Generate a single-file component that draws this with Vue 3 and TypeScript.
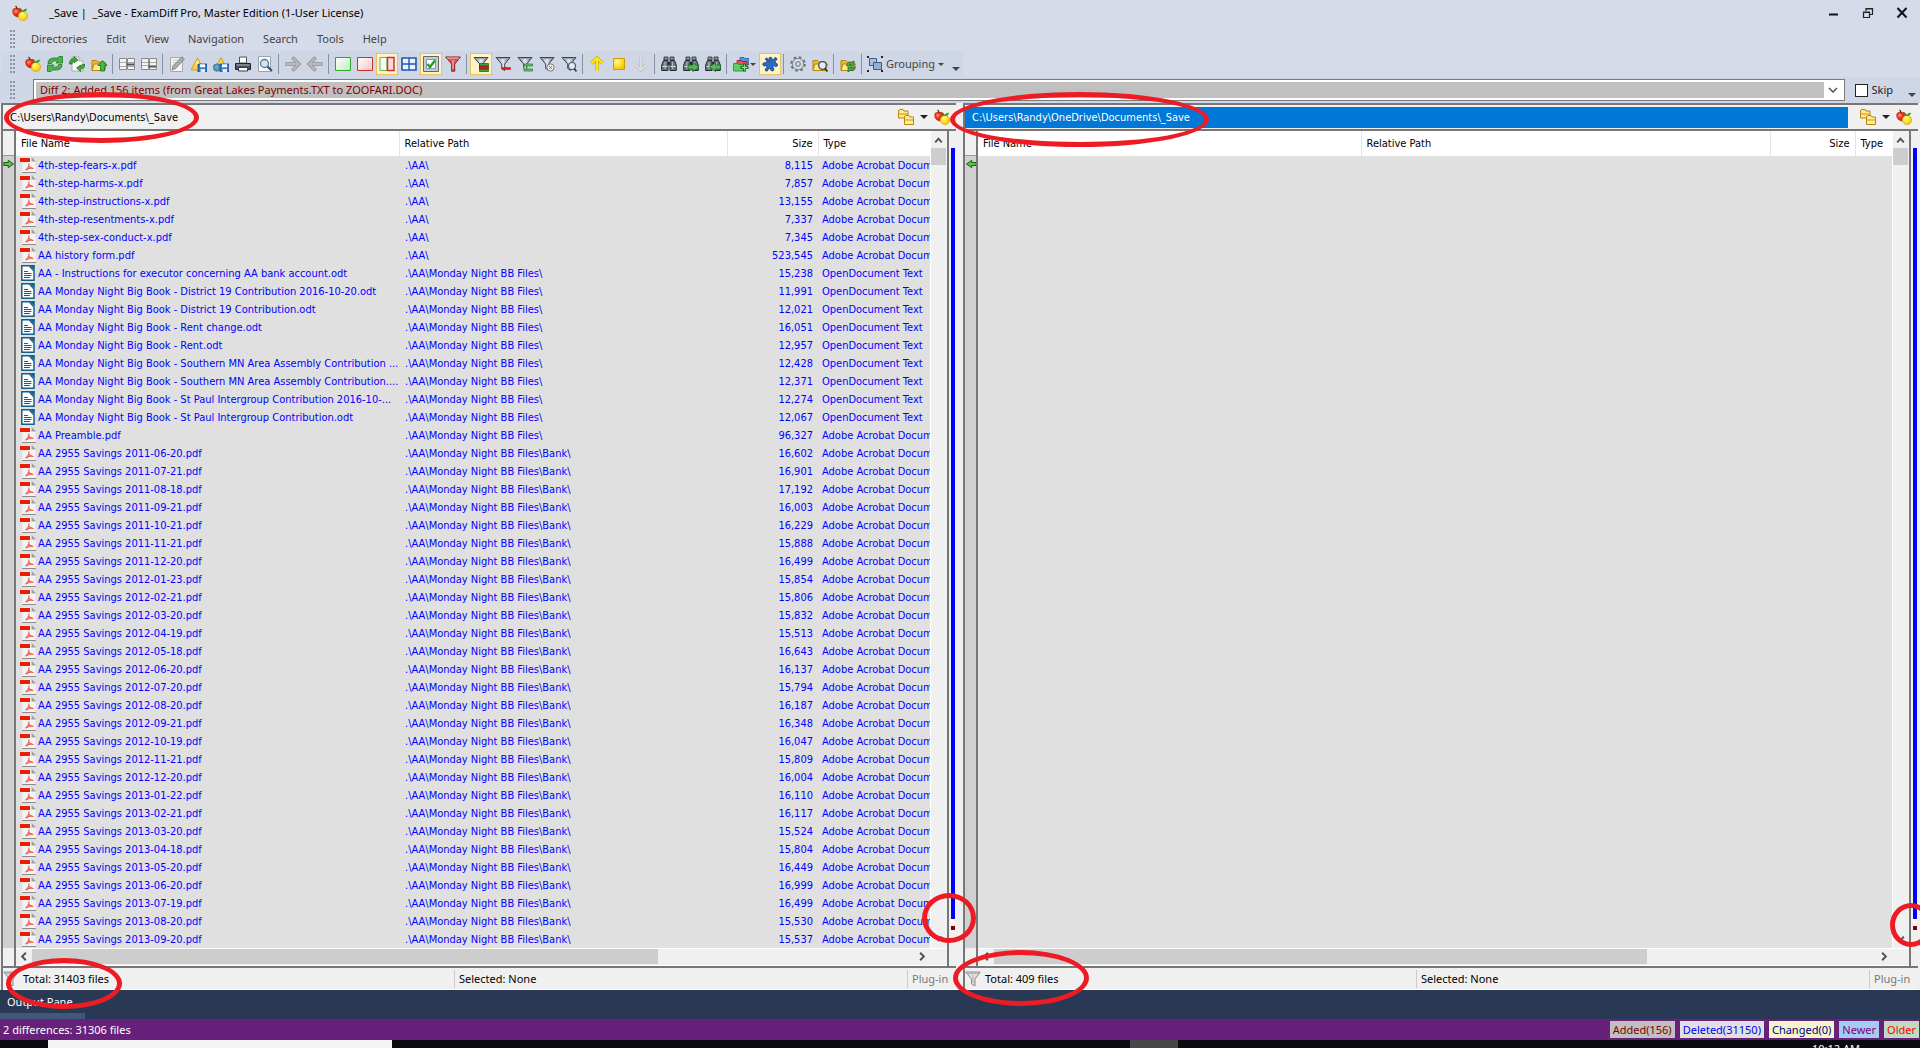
<script setup lang="ts">
import { ref } from 'vue'

interface FileRow { name: string; path: string; size: string; kind: 'pdf' | 'odt' }
interface Tool { icon: string; label: string; on?: boolean; drop?: boolean }

const menus = ['Directories', 'Edit', 'View', 'Navigation', 'Search', 'Tools', 'Help']

const fruit = '<path d="M5 3.500Q.6 2.500.6 6.500 1 11 5.500 12 10.500 11 10 6 9.500 2.500 5 3.500z" fill="url(#gRed)" stroke="#b51a08" stroke-width=".5"/><path d="M5 4Q5 2 3.500 1" stroke="#5a2408" fill="none" stroke-width="1.300"/><circle cx="11" cy="11" r="4.600" fill="url(#gYel)" stroke="#d99a00" stroke-width=".6"/><path d="M10.500 7Q7.500 6.500 8.500 4 11 4.500 10.800 6.500 11.500 3.500 15 3.800 14.500 7 10.500 7z" fill="#2f9e1c"/>'
const folder = '<path d="M1 4.500h4.500l1.500 1.500h7v8H1z" fill="#e6ba35" stroke="#b8860b"/><path d="M3 8h12.500l-2 6.500H1z" fill="#ffe98a" stroke="#b8860b"/>'
const funnel = '<path d="M1 1.500h14L9.700 8v6.500l-3 -2V8z" fill="url(#gSteel)" stroke="#3d4650" stroke-width="1"/><path d="M2.500 2.500h11" stroke="#9aa4ae"/>'
const binoc = '<path d="M3 1h4v3H3zM9 1h4v3H9z" fill="#8b949e" stroke="#252c33" stroke-width=".8"/><path d="M2.500 4.500h4.500v10H.7V9zM9 4.500h4.500L15.300 9v5.500H9z" fill="#6c757e" stroke="#252c33"/><path d="M7 6h2v3H7z" fill="#252c33"/><path d="M1.500 10.500h5M9.500 10.500h5" stroke="#dfe4e8"/><path d="M4 6v7M11.500 6v7" stroke="#b7c0c8"/>'
const disk = '<path d="M7 8h9v8H7z" fill="#3a78cc" stroke="#174a91" stroke-width=".8"/><path d="M9 8.300h5v3H9z" fill="#fff"/><path d="M9.500 13h4.500v3H9.500z" fill="#dbe9fa"/>'
const warn = '<path d="M6.500 2L13 14H0z" fill="#ffd43a" stroke="#c99100" stroke-width=".8"/><path d="M6.500 4L9 8.500H4z" fill="#fff0a0"/>'

const icons: Record<string, string> = {
  fruit,
  refresh: '<path d="M1 7.500Q1 2 7 2h3.500L12 .5h3.500V7H9l1.800-2Q5 4 4.500 7.500z" fill="#4bb34b" stroke="#1d7a26" stroke-width=".8"/><path d="M15 8.500Q15 14 9 14H5.500L4 15.500H.5V9H7l-1.800 2Q11 12 11.500 8.500z" fill="#4bb34b" stroke="#1d7a26" stroke-width=".8"/>',
  pageRefresh: '<path d="M3 1h7l4 4v10H3z" fill="#fdfdfd" stroke="#a5abb5"/><path d="M10 1v4h4" fill="#dde" stroke="#a5abb5"/><path d="M.5 8Q.5 2.500 5 2.500V.5L9 4 5 7V5Q3 5 3 8z" fill="#3fa93f" stroke="#176b20" stroke-width=".7"/><path d="M15.800 8.500Q15.800 13 11.500 13v2.500L7.500 12l4-3v1.800Q13 10.500 13 8.500z" fill="#3fa93f" stroke="#176b20" stroke-width=".7"/>',
  folderUp: folder + '<path d="M11.500 4.500L16 9.500h-2.500V15h-4V9.500H7z" fill="#44b944" stroke="#16701f" stroke-width=".8"/>',
  mergeA: '<path d="M.5 2.500h7v11h-7zM8.500 2.500h7v11h-7z" fill="#f4f4f4" stroke="#8a8a8a"/><path d="M1 6.500h6M9 6.500h6M1 10.500h6M9 10.500h6" stroke="#aaa"/><path d="M8 8.500h7" stroke="#555" stroke-width="2"/>',
  mergeB: '<path d="M.5 2.500h7v11h-7zM8.500 2.500h7v11h-7z" fill="#f4f4f4" stroke="#8a8a8a"/><path d="M1 6.500h6M9 6.500h6M1 9.500h6" stroke="#aaa"/><path d="M8 10.500h7" stroke="#555" stroke-width="2"/>',
  edit: '<path d="M1.500 1.500h12v14h-12z" fill="#f3f3f3" stroke="#a8a8a8"/><path d="M4 4h7M3.500 6.500h5M3.500 9h3" stroke="#ccc"/><path d="M3 14l1-4L13 .8l2.500 2.400L6.500 12.500z" fill="#adadad" stroke="#777" stroke-width=".8"/>',
  saveWarn: warn + disk,
  saveGlobe: '<path d="M8 1.500L14 13H2z" fill="#ffd43a" stroke="#c99100" stroke-width=".8"/><circle cx="4" cy="11.500" r="3.700" fill="#4f93c9" stroke="#2c6698" stroke-width=".7"/><path d="M2 10q2-2 3 0t-1 3q-2 0-2-3z" fill="#74b856"/>' + disk,
  print: '<path d="M4.500 1h7v6h-7z" fill="#fff" stroke="#4c5661"/><path d="M.5 7.500h15v6H.5z" fill="#48525d" stroke="#20272e"/><path d="M1.500 9h13" stroke="#aeb6be"/><path d="M3.500 11.500h9v3.500h-9z" fill="#fff" stroke="#353d46"/>',
  preview: '<path d="M1.500 .5h12v15h-12z" fill="#fafafa" stroke="#9aa2ac"/><circle cx="7.500" cy="7.500" r="4" fill="#cfe5f6" stroke="#56779a" stroke-width="1.300"/><path d="M10.500 10.500L15 15" stroke="#34506d" stroke-width="2.200"/>',
  right: '<path d="M1 8h12M8.500 2.500L14 8l-5.500 5.500" fill="none" stroke="#8f8f8f" stroke-width="3.600" stroke-linecap="round"/><path d="M1 8h12M8.500 2.500L14 8l-5.500 5.500" fill="none" stroke="#b9b9b9" stroke-width="2" stroke-linecap="round"/>',
  left: '<path d="M15 8H3M7.500 2.500L2 8l5.500 5.500" fill="none" stroke="#8f8f8f" stroke-width="3.600" stroke-linecap="round"/><path d="M15 8H3M7.500 2.500L2 8l5.500 5.500" fill="none" stroke="#b9b9b9" stroke-width="2" stroke-linecap="round"/>',
  green: '<path d="M.5 1.500h15v13H.5z" fill="url(#gLg)" stroke="#2fa52f"/>',
  red: '<path d="M.5 1.500h15v13H.5z" fill="url(#gLr)" stroke="#c9302a"/>',
  split: '<path d="M1 1.500h7v13H1z" fill="#f4fff4" stroke="#6fae5c"/><path d="M8.500 1.500H15v13H8.500z" fill="#fbdcdc" stroke="#cf2b2b" stroke-width="1.400"/>',
  grid: '<path d="M1 2h14v12H1z" fill="#e8f3ff" stroke="#1f57b5" stroke-width="1.600"/><path d="M8 2v12M1 8h14" stroke="#1f57b5" stroke-width="1.400"/>',
  check: '<path d="M.5 .5h15v15H.5z" fill="#c5ccd6" stroke="#5d6978"/><path d="M3.500 3.500h9v9h-9z" fill="#fff" stroke="#8b95a2"/><path d="M4.500 8l2.500 3L12 4.500" fill="none" stroke="#23a023" stroke-width="2.400"/>',
  funnelRed: '<path d="M.7 1h14.600L9.700 8v7.200h-3V8z" fill="#d75a5a" stroke="#8e1717"/><path d="M2 2h12M8 4v9" stroke="#f6c4c4"/>',
  funnelAll: funnel + '<path d="M6.500 7.500h9v2.500h-9zM6.500 13h9v2.500h-9z" fill="#2ea63a" stroke="#115e1a" stroke-width=".7"/><path d="M6.500 10.200h9v2.500h-9z" fill="#d81e1e" stroke="#7d0a0a" stroke-width=".7"/>',
  funnelMinus: funnel + '<path d="M7 11.500h8.500v2H7z" fill="#ee1c1c" stroke="#b30808" stroke-width=".5"/>',
  funnelEq: funnel + '<path d="M7 8h8.500v2H7zM7 13h8.500v2H7z" fill="#6cc573" stroke="#1c7a27" stroke-width=".7"/>',
  funnelX: funnel + '<circle cx="11.500" cy="11.500" r="3.600" fill="#f2f2f2" stroke="#777"/><path d="M10 10l3 3M13 10l-3 3" stroke="#c85a5a"/>',
  funnelFind: funnel + '<circle cx="11" cy="10" r="3.500" fill="#e1ecf5" stroke="#46607a" stroke-width="1.200"/><path d="M13 12.500l2.500 3" stroke="#333" stroke-width="1.600"/>',
  up: '<path d="M8 15V3M2.500 7.500L8 2l5.500 5.500" fill="none" stroke="#cfae00" stroke-width="3.400"/><path d="M8 15V3M2.500 7.500L8 2l5.500 5.500" fill="none" stroke="#ffe81a" stroke-width="2"/>',
  stop: '<path d="M2.500 2.500h11v11h-11z" fill="url(#gYel)" stroke="#d79b00"/>',
  down: '<path d="M8 1v12M2.500 8.500L8 14l5.500-5.500" fill="none" stroke="#b9bcc2" stroke-width="3.200"/><path d="M8 1v12M2.500 8.500L8 14l5.500-5.500" fill="none" stroke="#dcdee2" stroke-width="1.800"/>',
  find: binoc,
  findNext: binoc + '<path d="M5 9h5V6.500l6 4.500-6 4.500V13H5z" fill="#57b757" stroke="#1a6a22" stroke-width=".8"/>',
  findPrev: binoc + '<path d="M15.500 9h-5V6.500L4.500 11l6 4.500V13h5z" fill="#57b757" stroke="#1a6a22" stroke-width=".8"/>',
  foldersAdd: '<path d="M7 1.500h4l1 1h4v6H7z" fill="#5b8fe0" stroke="#2255a8" stroke-width=".8"/><path d="M4 4.500h4l1 1h5v6H4z" fill="#ee5050" stroke="#a51616" stroke-width=".8"/><path d="M.5 7.500h4l1 1h5V15H.5z" fill="#5fce6a" stroke="#1d8a2b" stroke-width=".8"/><path d="M11.500 7.500v8M7.500 11.500h8" stroke="#0d5e17" stroke-width="3"/><path d="M11.500 8.500v6M8.500 11.500h6" stroke="#7eea86" stroke-width="1.300"/>',
  plugin: '<path d="M8 5.500Q5.500 3 7.500 1.500 10.500 .5 10 4l2-.7Q12.500 .5 14.500 2 16 4 13 5l.7 2Q16.300 7.500 15.300 10 13.500 11.500 12 9.500L10.800 11Q13 13.500 11 15 8 15.500 8.500 12l-2 .8Q6 16 3.500 14.800 2.500 12.500 5 11.500L4.200 9.500Q1 11 .7 8 1.500 5.500 4.500 7L5 5Q2.500 4 4 2 6 1.500 6 4.500z" fill="#2d6ac4" stroke="#173f86" stroke-width=".8"/>',
  gear: '<circle cx="8" cy="8" r="6.500" fill="none" stroke="#6c757f" stroke-width="2.600" stroke-dasharray="2.600 2.500"/><circle cx="8" cy="8" r="5.600" fill="#d9dee3" stroke="#7c858f"/><circle cx="8" cy="8" r="2.400" fill="#cfd6e5" stroke="#68717b"/>',
  folderFind: folder + '<circle cx="10.500" cy="9.500" r="3.800" fill="#e1eef8" stroke="#3e4b58" stroke-width="1.300"/><path d="M12.800 12.500L15.500 15.500" stroke="#333" stroke-width="1.800"/>',
  folderSync: folder + '<path d="M6.500 10Q7.500 5.500 12 6.500L14 5v5H9.500L11 8.500Q9 8 8.500 10z" fill="#49b04d" stroke="#14601c" stroke-width=".7"/><path d="M15.500 11Q14.500 15.500 10 14.500L8 16v-5h4.500L11 12.500q2 .5 2.500-1.500z" fill="#49b04d" stroke="#14601c" stroke-width=".7"/>',
  group: '<path d="M0 0h2v2H0zM14 0h2v2h-2zM0 14h2v2H0zM14 14h2v2h-2z" fill="#222"/><path d="M2.500 2.500h7v7h-7z" fill="#a9bfdb" stroke="#3e5c80"/><path d="M6.500 6.500h8v7h-8z" fill="#8fb0d6" stroke="#3e5c80"/>',
  folders: '<path d="M.5 1.500L2 .5h3l1 1.500h4v7H.5z" fill="#ffe98a" stroke="#b8860b"/><path d="M.5 5h9" stroke="#c9981c"/><path d="M6.500 7.500L8 6.500h3L12 8h3.500v7.500h-9z" fill="#ffec96" stroke="#b8860b"/><path d="M7 11h8" stroke="#c9981c"/>',
  pdf: '<path d="M2.500 .5h9l4 4v11h-13z" fill="#f4f4f4"/><path d="M2 15.500h14" stroke="#8c8c8c"/><path d="M11.500 0v4.500H16z" fill="#9c9c9c"/><path d="M0 1h10v4H0z" fill="#ec1c00"/><path d="M5.500 13Q9 11 9 6.500M8.500 8.500Q10 11.500 13.500 11.500M6 13Q9 10.500 12.500 11.500" fill="none" stroke="#ef5b50" stroke-width="1.100"/>',
  odt: '<path d="M1.800 .8h7.500L14 6v9.200H1.800z" fill="#fff" stroke="#10608f" stroke-width="1.500"/><path d="M9.500 0L14.800 5.500V0z" fill="#10608f"/><path d="M4 6.500h4M4 8.500h7.500M4 10.500h7.500M4 12.500h6" stroke="#10608f"/>',
  markRight: '<path d="M1 6h6V3l7 5-7 5v-3H1z" fill="#55c43e" stroke="#1d5f16" stroke-width="1.300"/>',
  markLeft: '<path d="M15 6H9V3L2 8l7 5v-3h6z" fill="#55c43e" stroke="#1d5f16" stroke-width="1.300"/>',
  funnelGray: '<path d="M.7 1h14.600L10 8v7l-3.500-2V8z" fill="#dedede" stroke="#8c8c8c"/><path d="M2 2.500h12M8 4v8" stroke="#b5b5b5"/>',
}

const toolGroups: Tool[][] = [
  [{ icon: 'fruit', label: 'Compare' }, { icon: 'refresh', label: 'Re-compare' }, { icon: 'pageRefresh', label: 'Refresh files' }, { icon: 'folderUp', label: 'Up one level' }],
  [{ icon: 'mergeA', label: 'Side by side' }, { icon: 'mergeB', label: 'Stacked' }],
  [{ icon: 'edit', label: 'Edit' }, { icon: 'saveWarn', label: 'Save' }, { icon: 'saveGlobe', label: 'Save HTML report' }, { icon: 'print', label: 'Print' }, { icon: 'preview', label: 'Print preview' }],
  [{ icon: 'right', label: 'Copy right' }, { icon: 'left', label: 'Copy left' }],
  [{ icon: 'green', label: 'First only' }, { icon: 'red', label: 'Second only' }, { icon: 'split', label: 'Both', on: true }, { icon: 'grid', label: 'Grid' }, { icon: 'check', label: 'Select', on: true }, { icon: 'funnelRed', label: 'Filters' }],
  [{ icon: 'funnelAll', label: 'Show all', on: true }, { icon: 'funnelMinus', label: 'Show differences' }, { icon: 'funnelEq', label: 'Show identical' }, { icon: 'funnelX', label: 'Hide excluded' }, { icon: 'funnelFind', label: 'Custom filter' }],
  [{ icon: 'up', label: 'Previous difference' }, { icon: 'stop', label: 'Current difference' }, { icon: 'down', label: 'Next difference' }],
  [{ icon: 'find', label: 'Find' }, { icon: 'findNext', label: 'Find next' }, { icon: 'findPrev', label: 'Find previous' }],
  [{ icon: 'foldersAdd', label: 'Snapshots', drop: true }, { icon: 'plugin', label: 'Plug-ins', on: true }],
  [{ icon: 'gear', label: 'Options' }, { icon: 'folderFind', label: 'Browse' }],
  [{ icon: 'folderSync', label: 'Synchronize' }],
]

const aa = '.\\AA\\'
const bb = aa + 'Monday Night BB Files\\'
const big = 'AA Monday Night Big Book - '
const pdf = (name: string, path: string, size: string): FileRow => ({ name, path, size, kind: 'pdf' })
const odt = (name: string, size: string): FileRow => ({ name, path: bb, size, kind: 'odt' })

const savings = `2011-06-20 16,602|2011-07-21 16,901|2011-08-18 17,192|2011-09-21 16,003|2011-10-21 16,229|2011-11-21 15,888|2011-12-20 16,499|2012-01-23 15,854|2012-02-21 15,806|2012-03-20 15,832|2012-04-19 15,513|2012-05-18 16,643|2012-06-20 16,137|2012-07-20 15,794|2012-08-20 16,187|2012-09-21 16,348|2012-10-19 16,047|2012-11-21 15,809|2012-12-20 16,004|2013-01-22 16,110|2013-02-21 16,117|2013-03-20 15,524|2013-04-18 15,804|2013-05-20 16,449|2013-06-20 16,999|2013-07-19 16,499|2013-08-20 15,530|2013-09-20 15,537`

const files: FileRow[] = [
  pdf('4th-step-fears-x.pdf', aa, '8,115'),
  pdf('4th-step-harms-x.pdf', aa, '7,857'),
  pdf('4th-step-instructions-x.pdf', aa, '13,155'),
  pdf('4th-step-resentments-x.pdf', aa, '7,337'),
  pdf('4th-step-sex-conduct-x.pdf', aa, '7,345'),
  pdf('AA history form.pdf', aa, '523,545'),
  odt('AA - Instructions for executor concerning AA bank account.odt', '15,238'),
  odt(big + 'District 19 Contribution 2016-10-20.odt', '11,991'),
  odt(big + 'District 19 Contribution.odt', '12,021'),
  odt(big + 'Rent change.odt', '16,051'),
  odt(big + 'Rent.odt', '12,957'),
  odt(big + 'Southern MN Area Assembly Contribution ...', '12,428'),
  odt(big + 'Southern MN Area Assembly Contribution....', '12,371'),
  odt(big + 'St Paul Intergroup Contribution 2016-10-...', '12,274'),
  odt(big + 'St Paul Intergroup Contribution.odt', '12,067'),
  pdf('AA Preamble.pdf', bb, '96,327'),
  ...savings.split('|').map((s) => {
    const [date, size] = s.split(' ')
    return pdf(`AA 2955 Savings ${date}.pdf`, bb + 'Bank\\', size)
  }),
]

const panes = ref([
  { id: 'first', dir: 'C:\\Users\\Randy\\Documents\\_Save', active: false, total: 'Total: 31403 files', mark: 'markRight', rows: files },
  { id: 'second', dir: 'C:\\Users\\Randy\\OneDrive\\Documents\\_Save', active: true, total: 'Total: 409 files', mark: 'markLeft', rows: [] as FileRow[] },
])

const legend = [
  { text: 'Added(156)', cls: 'added' },
  { text: 'Deleted(31150)', cls: 'deleted' },
  { text: 'Changed(0)', cls: 'changed' },
  { text: 'Newer', cls: 'newer' },
  { text: 'Older', cls: 'older' },
]
const typeName = { pdf: 'Adobe Acrobat Docum', odt: 'OpenDocument Text' }
const skip = ref(false)
</script>

<template>
  <div class="app">
    <svg class="defs" width="0" height="0" aria-hidden="true">
      <defs>
        <radialGradient id="gRed" cx=".35" cy=".35" r=".7"><stop offset="0" stop-color="#ff9a80" /><stop offset=".4" stop-color="#f0351c" /><stop offset="1" stop-color="#cc1a06" /></radialGradient>
        <radialGradient id="gYel" cx=".35" cy=".3" r=".9"><stop offset="0" stop-color="#fff9a0" /><stop offset=".5" stop-color="#ffdc1e" /><stop offset="1" stop-color="#f2b200" /></radialGradient>
        <linearGradient id="gSteel"><stop offset="0" stop-color="#6d7883" /><stop offset=".5" stop-color="#e6ebef" /><stop offset="1" stop-color="#56606a" /></linearGradient>
        <linearGradient id="gLg" x2="1" y2="1"><stop offset="0" stop-color="#fff" /><stop offset="1" stop-color="#bfeebf" /></linearGradient>
        <linearGradient id="gLr" x2="1" y2="1"><stop offset="0" stop-color="#fff" /><stop offset="1" stop-color="#f8c4c0" /></linearGradient>
      </defs>
    </svg>

    <header class="titlebar">
      <svg class="icon" viewBox="0 0 16 16" v-html="icons.fruit" />
      <h1>_Save |&nbsp; _Save - ExamDiff Pro, Master Edition (1-User License)</h1>
      <div class="win">
        <button type="button" aria-label="Minimize"><svg viewBox="0 0 12 12"><path d="M1 7.500h9" stroke="#111" stroke-width="2" /></svg></button>
        <button type="button" aria-label="Restore"><svg viewBox="0 0 12 12"><path d="M1.500 5.500h6v5h-6zM1 5h7M4 4V1.500h6.500v6H8M4 2h6.500" fill="none" stroke="#222" stroke-width="1.200" /></svg></button>
        <button type="button" aria-label="Close"><svg viewBox="0 0 12 12"><path d="M1.500 1l9 9.500M10.500 1l-9 9.500" stroke="#111" stroke-width="2" /></svg></button>
      </div>
    </header>

    <nav class="menubar">
      <i class="grip" />
      <button v-for="m in menus" :key="m" type="button">{{ m }}</button>
    </nav>

    <div class="toolbar" role="toolbar">
      <i class="grip" />
      <div v-for="(g, gi) in toolGroups" :key="gi" class="group">
        <button v-for="t in g" :key="t.icon" type="button" :aria-label="t.label" :class="{ on: t.on, drop: t.drop }">
          <svg class="icon" viewBox="0 0 16 16" v-html="icons[t.icon]" />
          <i v-if="t.drop" class="caret small" />
        </button>
      </div>
      <button type="button" class="grouping">
        <svg class="icon" viewBox="0 0 16 16" v-html="icons.group" />Grouping<i class="caret small" />
      </button>
      <i class="caret more" />
    </div>

    <div class="diffbar">
      <i class="grip" />
      <div class="combo">
        <select aria-label="Difference">
          <option>Diff 2: Added 156 items (from Great Lakes Payments.TXT to ZOOFARI.DOC)</option>
        </select>
        <svg viewBox="0 0 18 16"><path d="M5 6l4 4 4-4" fill="none" stroke="#444" stroke-width="1.300" /></svg>
      </div>
      <label><input v-model="skip" type="checkbox" />Skip</label>
      <i class="caret more" />
    </div>

    <main class="panes">
      <section v-for="p in panes" :key="p.id" class="pane" :class="p.id">
        <div class="pathrow">
          <input v-model="p.dir" :class="{ active: p.active }" aria-label="Directory" spellcheck="false" />
          <button type="button" aria-label="Browse folders"><svg class="icon" viewBox="0 0 16 16" v-html="icons.folders" /></button>
          <button type="button" aria-label="History"><i class="caret" /></button>
          <button type="button" aria-label="Compare"><svg class="icon" viewBox="0 0 16 16" v-html="icons.fruit" /></button>
          <span class="ring ring-path" />
        </div>

        <div class="body">
          <div class="gutter">
            <div class="gutter-head" />
            <div class="gutter-track"><svg viewBox="0 0 16 16" v-html="icons[p.mark]" /></div>
            <div class="gutter-foot" />
          </div>
          <div class="view">
            <div class="main">
              <div class="list">
                <table>
                  <colgroup><col class="c-name"><col class="c-path"><col class="c-size"><col></colgroup>
                  <thead>
                    <tr><th>File Name</th><th>Relative Path</th><th class="num">Size</th><th>Type</th></tr>
                  </thead>
                  <tbody>
                    <tr v-for="f in p.rows" :key="f.name">
                      <td><svg class="icon" viewBox="0 0 16 16" v-html="icons[f.kind]" />{{ f.name }}</td>
                      <td>{{ f.path }}</td>
                      <td class="num">{{ f.size }}</td>
                      <td class="type">{{ typeName[f.kind] }}</td>
                    </tr>
                  </tbody>
                </table>
              </div>
              <div class="vscroll">
                <svg viewBox="0 0 16 16"><path d="M4.500 11L8 7l3.500 4" fill="none" stroke="#505050" stroke-width="2" /></svg>
                <i class="thumb" />
                <svg class="end" viewBox="0 0 16 16"><path d="M4.500 5L8 9l3.500-4" fill="none" stroke="#505050" stroke-width="2" /></svg>
              </div>
            </div>
            <div class="hscroll">
              <svg viewBox="0 0 16 16"><path d="M10 4L6 8l4 4" fill="none" stroke="#505050" stroke-width="2" /></svg>
              <div class="track"><i class="thumb" /></div>
              <svg viewBox="0 0 16 16"><path d="M6 4l4 4-4 4" fill="none" stroke="#505050" stroke-width="2" /></svg>
            </div>
          </div>
          <div class="strip">
            <i class="blue" /><i class="red" />
            <span class="ring ring-strip" />
          </div>
        </div>

        <footer class="status">
          <svg class="icon" viewBox="0 0 16 16" v-html="icons.funnelGray" />
          <span class="total">{{ p.total }}</span>
          <span class="selected">Selected: None</span>
          <span class="plug">Plug-in</span>
          <span class="ring ring-total" />
        </footer>
      </section>
    </main>

    <div class="output"><button type="button">Output Pane</button></div>

    <footer class="appstatus">
      <span class="summary">2 differences: 31306 files</span>
      <span v-for="l in legend" :key="l.text" class="tag" :class="l.cls">{{ l.text }}</span>
    </footer>

    <div class="taskbar">
      <span class="search" /><span class="gap-a" /><span class="task" /><span class="gap-b" /><time>10:12 AM</time>
    </div>
  </div>
</template>

<style>
body { background: #0b0a10; }
</style>

<style scoped>
.app { position: relative; overflow: hidden; background: #d6dbe9; font: 11px/16px "Noto Sans", "Open Sans", sans-serif; color: #1b1b1b; }
.app * { box-sizing: border-box; }
.defs { position: absolute; }
button { border: 0; padding: 0; background: none; font: inherit; color: inherit; }
svg { display: block; flex: none; }
i { display: block; flex: none; }
.icon { width: 16px; height: 16px; }

.titlebar { display: flex; align-items: center; height: 26px; padding: 0 12px 0 12px; color: #000; }
.titlebar h1 { flex: 1; margin: 0 0 0 21px; font-size: 11px; font-weight: 400; }
.win { display: flex; gap: 22px; }
.win svg { width: 12px; height: 12px; }

.grip { width: 5px; height: 18px; margin: 0 8px 0 10px; background: radial-gradient(circle at 1px 1px, #8a93a8 1px, transparent 1px) 0 0 / 3px 4px; }
.menubar { display: flex; align-items: center; gap: 1px; height: 25px; color: #444; }
.menubar button { padding: 0 9px; }
.menubar .grip { margin-right: 6px; }

.toolbar { display: flex; align-items: center; width: max-content; height: 26px; margin-left: 1px; background: #cfd6e5; }
.toolbar .grip { margin-left: 9px; margin-right: 7px; }
.group { display: flex; align-items: center; }
.group::after { content: ""; width: 1px; height: 20px; margin: 0 3px 0 2px; background: #8591a2; }
.group button { display: flex; align-items: center; justify-content: center; width: 22px; height: 22px; }
.group button.on { border: 1px solid #e5c365; background: #fff2c4; }
.group button.drop { width: 29px; gap: 1px; }
.grouping { display: flex; align-items: center; gap: 3px; padding-left: 2px; color: #444; }
.caret { width: 0; height: 0; border: 4px solid transparent; border-top-color: #222; border-bottom: 0; }
.caret.small { border-width: 3px; border-bottom: 0; border-top-color: #444; }
.caret.more { align-self: flex-end; margin: 0 3px 6px 8px; border-top-color: #444; }

.diffbar { display: flex; align-items: center; height: 26px; background: #cfd6e5; }
.diffbar .caret.more { margin: 0 4px 6px 15px; }
.combo { display: flex; flex: 1; align-items: center; height: 22px; margin: 0 10px 0 10px; padding: 2px; border: 1px solid #7a7a7a; background: #fff; }
.combo select { flex: 1; min-width: 0; height: 16px; padding: 0 4px; border: 0; border-radius: 0; appearance: none; background: #c0c0c0; color: #800000; font: inherit; }
.combo svg { width: 18px; height: 16px; }
.diffbar label { display: flex; align-items: center; gap: 3px; }
.diffbar input { width: 13px; height: 13px; margin: 0; border: 1px solid #222; appearance: none; background: #fff; }
.diffbar input:checked { background: #444; }

.panes { display: flex; gap: 7px; padding: 0 2px 0 1px; background: #f0f0f0; }
.pane { display: flex; flex: 1; flex-direction: column; min-width: 0; border-left: 2px solid #777; font: 11px/18px "DejaVu Sans Condensed", "DejaVu Sans", sans-serif; }
.pathrow { position: relative; display: flex; align-items: center; height: 28px; padding-right: 6px; border-top: 2px solid #777; border-bottom: 2px solid #777; }
.pathrow input { flex: 1; min-width: 0; height: 21px; margin-right: 12px; padding: 0 7px; border: 0; background: transparent; color: #000; font: inherit; }
.pathrow input.active { background: #0078d7; color: #fff; }
.pathrow button { display: flex; }
.pathrow button + button { margin-left: 6px; }

.body { display: flex; flex: 1; }
.gutter { display: flex; flex-direction: column; width: 13px; border-right: 2px solid #777; }
.gutter-head { height: 25px; border-bottom: 1px solid #999; }
.gutter-track { flex: 1; overflow: hidden; background: #d0d0d0; }
.gutter-track svg { width: 12px; height: 16px; }
.gutter-foot { height: 18px; }
.view { display: flex; flex: 1; flex-direction: column; min-width: 0; }
.main { display: flex; flex: 1; }
.list { flex: 1; min-width: 0; background: #e0e0e0; }
table { width: 100%; border-collapse: collapse; table-layout: fixed; color: #00f; }
.c-name { width: 383px; }
.c-path { width: 328px; }
.c-size { width: 91px; }
.second .c-path { width: 409px; }
.second .c-size { width: 85px; }
th { height: 25px; padding: 0 5px; border-right: 1px solid #e5e5e5; background: #fff; color: #000; font-weight: 400; text-align: left; }
th:last-child { border-right: 0; }
td { height: 18px; padding: 2px 0 0 6px; overflow: hidden; line-height: 16px; white-space: nowrap; }
td:first-child { padding-left: 4px; }
td.type { padding-left: 4px; }
td .icon { float: left; margin: -1px 2px 0 0; }
th.num, td.num { padding-right: 5px; text-align: right; }
.vscroll { display: flex; flex-direction: column; width: 17px; border-left: 1px solid #fff; background: #f0f0f0; }
.vscroll svg { width: 15px; height: 17px; }
.vscroll .thumb { width: 15px; height: 17px; background: #cdcdcd; }
.vscroll .end { margin-top: auto; }
.hscroll { display: flex; align-items: center; height: 18px; padding: 0 17px 2px 0; border-top: 1px solid #fff; border-bottom: 1px solid #fff; background: #f0f0f0; }
.hscroll svg { width: 16px; height: 15px; }
.hscroll .track { flex: 1; }
.hscroll .thumb { width: 71%; height: 15px; background: #cdcdcd; }
.second .hscroll .thumb { width: 74%; }
.strip { position: relative; display: flex; flex-direction: column; width: 9px; padding: 17px 1px 0 2px; border-left: 2px solid #777; }
.strip .blue { flex: 1; background: #00f; }
.strip .red { height: 4px; margin: 7px 0 36px; background: #800000; box-shadow: 0 -7px #fff; }

.status { position: relative; display: flex; align-items: center; height: 24px; border-top: 2px solid #777; border-bottom: 1px solid #fff; font: 11px/18px "Noto Sans", "Open Sans", sans-serif; color: #000; }
.status .total { width: 435px; padding-left: 4px; }
.status .selected { flex: 1; padding-left: 4px; border-left: 1px solid #ccc; }
.status .plug { width: 49px; padding-left: 4px; border-left: 1px solid #ccc; color: #777; }

.output { height: 29px; background: #293955; }
.output button { display: block; width: 85px; height: 29px; padding: 0 0 0 7px; border-bottom: 6px solid #40587c; color: #fff; text-align: left; }
.appstatus { display: flex; align-items: center; gap: 5px; height: 21px; padding: 0 1px 0 3px; background: #68217a; color: #fff; }
.summary { flex: 1; }
.tag { height: 17px; padding: 0 3px; line-height: 17px; }
.added { background: #c0c0c0; color: #800000; }
.deleted { background: #e0e0e0; color: #00f; }
.changed { background: #f5f5cc; color: #000080; }
.newer { background: #a6caf0; color: #800080; }
.older { background: #c0dcc0; color: #f00; }
.taskbar { display: flex; height: 8px; padding: 0 60px 0 48px; overflow: hidden; background: #0b0a10; color: #fff; }
.search { width: 344px; background: #f3f3f3; }
.gap-a { flex: 737; }
.task { width: 48px; background: #474749; }
.gap-b { flex: 633; }
.taskbar time { padding-top: 1px; }

/* hand-drawn highlights */
.ring { position: absolute; z-index: 2; border: 5px solid #ed1c24; border-radius: 50%; pointer-events: none; }
.ring-path { left: 1px; top: -13px; width: 195px; height: 51px; }
.second .ring-path { left: -15px; width: 259px; height: 55px; }
.ring-strip { right: -20px; bottom: 23px; width: 54px; height: 50px; }
.second .ring-strip { right: -14px; bottom: 19px; width: 42px; height: 44px; }
.ring-total { left: 3px; top: -10px; width: 116px; height: 51px; }
.second .ring-total { left: -12px; top: -18px; width: 136px; height: 56px; }
</style>
